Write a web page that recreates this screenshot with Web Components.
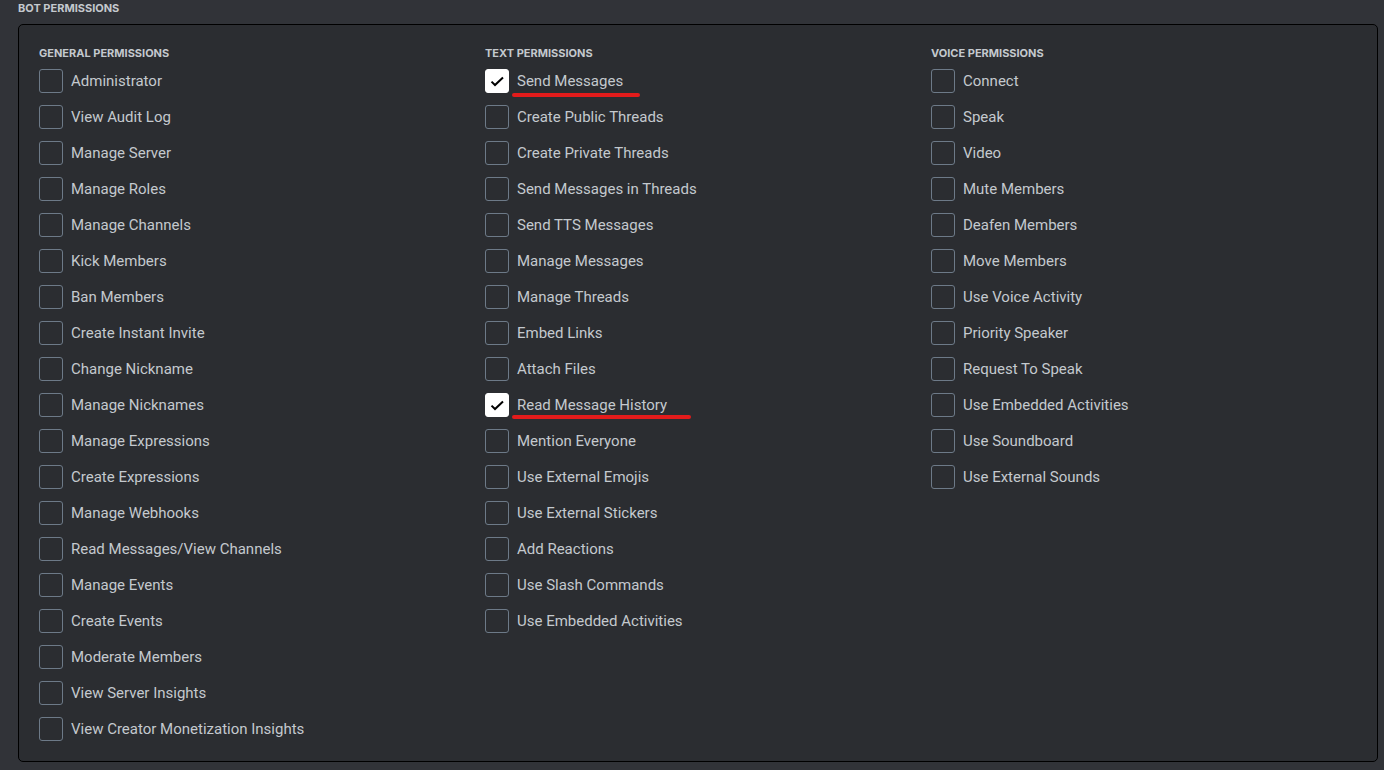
<!DOCTYPE html>
<html lang="en">
<head>
<meta charset="utf-8">
<meta name="viewport" content="width=device-width, initial-scale=1">
<title>Bot Permissions</title>
<style>
  body {
    margin: 0;
    min-height: 100vh;
    background: #313338;
    color: #c4c9ce;
    font-family: Roboto, "Noto Sans", sans-serif;
    font-size: 15px;
  }
</style>
</head>
<body>

<template id="permission-panel-template">
  <style>
    :host { display: block; padding: 0 6px 8px 18px; }
    h2 {
      margin: 0 0 8px;
      font: 700 11px/16px Inter, "Noto Sans", sans-serif;
      text-transform: uppercase;
    }
    .panel {
      display: grid;
      grid-template-columns: repeat(3, minmax(0, 1fr));
      padding: 20px 0 20px 20px;
      border: 1px solid #000;
      border-radius: 5px;
      background: #2b2d31;
    }
  </style>
  <section aria-labelledby="title">
    <h2 id="title"><slot name="title"></slot></h2>
    <div class="panel"><slot></slot></div>
  </section>
</template>

<template id="permission-group-template">
  <style>
    :host { display: block; }
    fieldset { margin: 0; padding: 0; border: 0; min-width: 0; }
    legend {
      padding: 0;
      margin-bottom: 8px;
      font: 700 11px/16px Inter, "Noto Sans", sans-serif;
      text-transform: uppercase;
    }
    .list { display: flex; flex-direction: column; gap: 12px; }
  </style>
  <fieldset>
    <legend></legend>
    <div class="list"><slot></slot></div>
  </fieldset>
</template>

<template id="permission-option-template">
  <style>
    :host { display: block; position: relative; }
    label { display: flex; align-items: center; gap: 8px; line-height: 24px; width: fit-content; cursor: pointer; }
    .box { display: grid; width: 24px; height: 24px; flex: none; }
    .box > * { grid-area: 1 / 1; }
    input {
      appearance: none;
      margin: 0;
      width: 24px;
      height: 24px;
      box-sizing: border-box;
      border: 1px solid #6d7a88;
      border-radius: 3px;
      cursor: pointer;
    }
    input:checked { background: #fff; border-color: #fff; }
    svg { width: 24px; height: 24px; visibility: hidden; pointer-events: none; }
    input:checked + svg { visibility: visible; }
    .mark { display: none; }
    :host([marked]) .mark {
      display: block;
      position: absolute;
      left: 27px;
      top: var(--mark-top, 24px);
      width: var(--mark-width, 128px);
      height: 4px;
      border-radius: 2px;
      background: #e31b1b;
    }
  </style>
  <label>
    <span class="box">
      <input type="checkbox">
      <svg viewBox="0 0 24 24" aria-hidden="true"><path d="M6.5 12.6 10 16 18 8.4" fill="none" stroke="#000" stroke-width="2"/></svg>
    </span>
    <span><slot></slot></span>
  </label>
  <span class="mark"></span>
</template>

<permission-panel>
  <span slot="title">Bot Permissions</span>
  <permission-group heading="General Permissions">
    <permission-option>Administrator</permission-option>
    <permission-option>View Audit Log</permission-option>
    <permission-option>Manage Server</permission-option>
    <permission-option>Manage Roles</permission-option>
    <permission-option>Manage Channels</permission-option>
    <permission-option>Kick Members</permission-option>
    <permission-option>Ban Members</permission-option>
    <permission-option>Create Instant Invite</permission-option>
    <permission-option>Change Nickname</permission-option>
    <permission-option>Manage Nicknames</permission-option>
    <permission-option>Manage Expressions</permission-option>
    <permission-option>Create Expressions</permission-option>
    <permission-option>Manage Webhooks</permission-option>
    <permission-option>Read Messages/View Channels</permission-option>
    <permission-option>Manage Events</permission-option>
    <permission-option>Create Events</permission-option>
    <permission-option>Moderate Members</permission-option>
    <permission-option>View Server Insights</permission-option>
    <permission-option>View Creator Monetization Insights</permission-option>
  </permission-group>
  <permission-group heading="Text Permissions">
    <permission-option checked marked>Send Messages</permission-option>
    <permission-option>Create Public Threads</permission-option>
    <permission-option>Create Private Threads</permission-option>
    <permission-option>Send Messages in Threads</permission-option>
    <permission-option>Send TTS Messages</permission-option>
    <permission-option>Manage Messages</permission-option>
    <permission-option>Manage Threads</permission-option>
    <permission-option>Embed Links</permission-option>
    <permission-option>Attach Files</permission-option>
    <permission-option checked marked style="--mark-top: 22px; --mark-width: 179px">Read Message History</permission-option>
    <permission-option>Mention Everyone</permission-option>
    <permission-option>Use External Emojis</permission-option>
    <permission-option>Use External Stickers</permission-option>
    <permission-option>Add Reactions</permission-option>
    <permission-option>Use Slash Commands</permission-option>
    <permission-option>Use Embedded Activities</permission-option>
  </permission-group>
  <permission-group heading="Voice Permissions">
    <permission-option>Connect</permission-option>
    <permission-option>Speak</permission-option>
    <permission-option>Video</permission-option>
    <permission-option>Mute Members</permission-option>
    <permission-option>Deafen Members</permission-option>
    <permission-option>Move Members</permission-option>
    <permission-option>Use Voice Activity</permission-option>
    <permission-option>Priority Speaker</permission-option>
    <permission-option>Request To Speak</permission-option>
    <permission-option>Use Embedded Activities</permission-option>
    <permission-option>Use Soundboard</permission-option>
    <permission-option>Use External Sounds</permission-option>
  </permission-group>
</permission-panel>

<script>
  class TemplateElement extends HTMLElement {
    constructor() {
      super();
      const template = document.getElementById(this.localName + '-template');
      this.attachShadow({ mode: 'open' }).append(template.content.cloneNode(true));
    }
  }

  class PermissionPanel extends TemplateElement {}

  class PermissionGroup extends TemplateElement {
    connectedCallback() {
      this.shadowRoot.querySelector('legend').textContent = this.getAttribute('heading');
    }
  }

  class PermissionOption extends TemplateElement {
    connectedCallback() {
      this.shadowRoot.querySelector('input').checked = this.hasAttribute('checked');
    }
  }

  customElements.define('permission-panel', PermissionPanel);
  customElements.define('permission-group', PermissionGroup);
  customElements.define('permission-option', PermissionOption);
</script>
</body>
</html>
